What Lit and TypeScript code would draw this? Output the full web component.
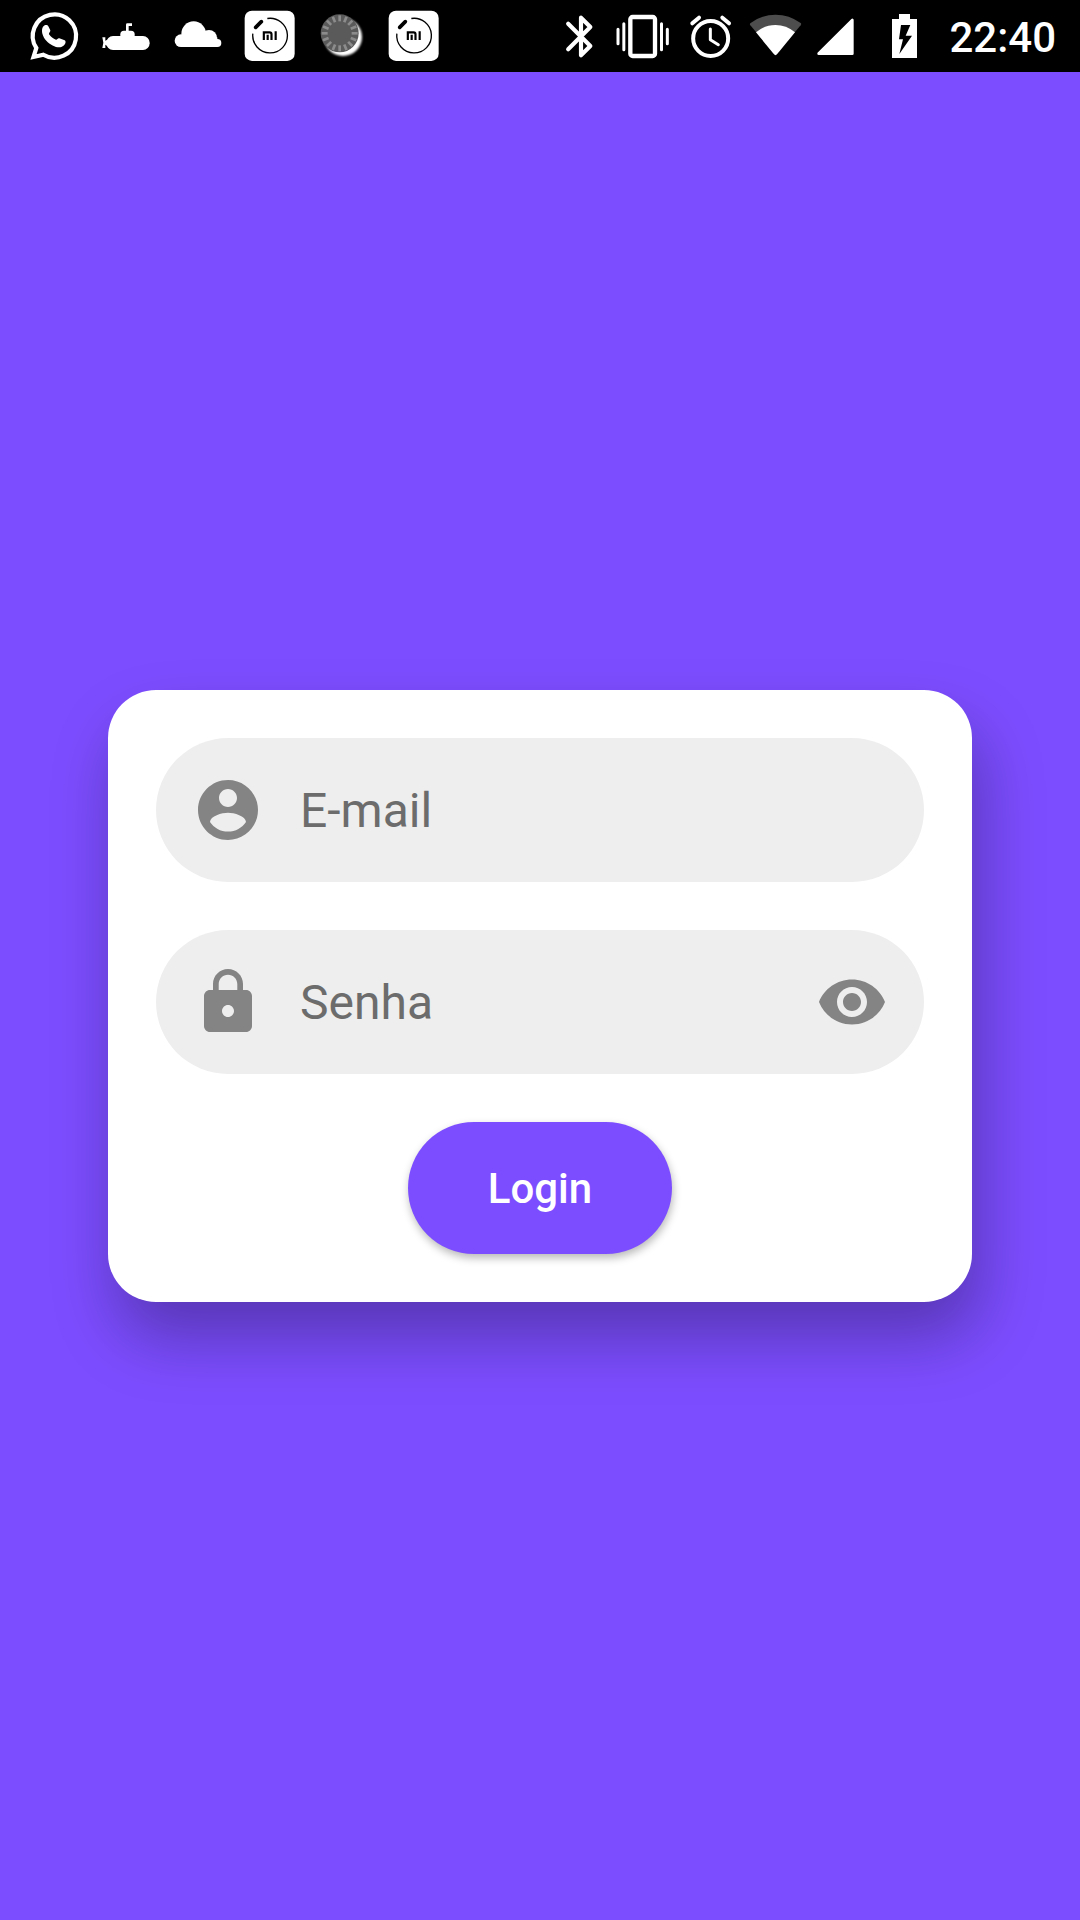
import { LitElement, html, svg, css } from "lit";
import { customElement, property } from "lit/decorators.js";

/* Status bar glyphs are drawn in thirds of a pixel inside 72px tall slots. */
const spokes = Array.from({ length: 16 }, (_, i) => i * 22.5);

const miBadge = svg`
  <rect x="44" y="32" width="150" height="151" rx="22" fill="#fff"/>
  <path d="M112 55.500A52 52 0 1 1 68.500 101" fill="none" stroke="#000" stroke-width="4"/>
  <path d="M77 82L94 65" stroke="#000" stroke-width="11" stroke-linecap="round"/>
  <path d="M101.500 120V97H119Q124.500 97 124.500 103V120M113 104V120M137 94V120" fill="none" stroke="#000" stroke-width="6.500"/>`;

const glyphs: Record<string, { x: number; w: number; art: unknown }> = {
  whatsapp: {
    x: 54, w: 216,
    art: svg`
      <path d="M109 144A65 65 0 1 1 130 164L100.500 171Z" fill="none" stroke="#fff" stroke-width="12.500" stroke-miterlimit="8"/>
      <path d="M134 76C139 74 143 75 145 79L151 91C152 95 146 99 147 103C152 110 160 116 168 119C171 120 174 113 178 115L194 121C200 125 196 137 184 141C172 145 152 136 139 122C128 110 122 92 129 80Z" fill="#fff"/>`,
  },
  submarine: {
    x: 270, w: 216,
    art: svg`
      <rect x="319" y="108" width="130" height="42" rx="20" fill="#fff"/>
      <path d="M361 112V103Q361 92 372 92H393Q404 92 404 103V112Z" fill="#fff"/>
      <path d="M382 95V74H396" fill="none" stroke="#fff" stroke-width="8" stroke-linejoin="round"/>
      <path d="M307 112H316V122L322 119V138L316 134V144H307L310 128Z" fill="#fff"/>`,
  },
  cloud: {
    x: 486, w: 216,
    art: svg`
      <g fill="#fff"><circle cx="543" cy="122" r="19"/><circle cx="581" cy="101" r="37"/>
      <circle cx="627" cy="114" r="24"/><circle cx="652" cy="129" r="12"/>
      <rect x="543" y="112" width="109" height="29"/></g>`,
  },
  mi: { x: 12, w: 216, art: miBadge },
  ball: {
    x: 228, w: 216,
    art: svg`
      <defs><filter id="soft" x="-20%" y="-20%" width="140%" height="140%"><feGaussianBlur stdDeviation="2.500"/></filter></defs>
      <circle cx="339" cy="111" r="57" fill="#fff" filter="url(#soft)"/>
      <circle cx="329" cy="100" r="57" fill="#5a5a5a"/>
      <g stroke="#8c8c8c" stroke-width="8">${spokes.map(
        (a) => svg`<path d="M329 64V46" transform="rotate(${a} 329 100)"/>`
      )}</g>`,
  },
  bluetooth: {
    x: 48, w: 150,
    art: svg`<path d="M84.500 71L151 138L123 166V53L151 81L84.500 148" fill="none" stroke="#fff" stroke-width="12.500" stroke-linecap="round" stroke-linejoin="round"/>`,
  },
  vibrate: {
    x: 198, w: 222,
    art: svg`
      <rect x="271" y="51" width="74" height="117" rx="7" fill="none" stroke="#fff" stroke-width="13"/>
      <path d="M251.500 71V149M364.500 71V149M234 88V131M382 88V131" stroke="#fff" stroke-width="9" stroke-linecap="round"/>`,
  },
  alarm: {
    x: 420, w: 186,
    art: svg`
      <circle cx="512" cy="115.500" r="52.500" fill="none" stroke="#fff" stroke-width="12"/>
      <path d="M511 87V119L535 134" fill="none" stroke="#fff" stroke-width="9" stroke-linecap="round" stroke-linejoin="round"/>
      <path d="M457 70L477 53M547 53L567 70" stroke="#fff" stroke-width="12" stroke-linecap="round"/>`,
  },
  wifi: {
    x: 606, w: 198,
    art: svg`
      <path d="M631 76Q628 72 632 69Q666 44 706.500 44Q748 44 782 69Q785 72 782 76L706.500 166Z" fill="#4d4d4d"/>
      <path d="M648 97Q674 75 706.500 75Q739 75 765 97L711 163Q706.500 168 702 163Z" fill="#fff"/>`,
  },
  signal: {
    x: 24, w: 186,
    art: svg`<path d="M56 160L157 60V161H56Z" fill="#fff" stroke="#fff" stroke-width="8" stroke-linejoin="round"/>`,
  },
  battery: {
    x: 210, w: 210,
    art: svg`
      <path d="M276 57H297V42H330V57H351V174H276Z" fill="#fff"/>
      <path d="M303 75H331L317 107H336L298 162L309 118H297Z" fill="#000"/>`,
  },
};

@customElement("status-glyph")
class StatusGlyph extends LitElement {
  @property() name = "";
  static styles = css`
    :host { display: block; flex: none; height: 72px; }
    .glyph { display: block; height: 72px; }
  `;
  render() {
    const g = glyphs[this.name];
    return html`<svg class="glyph" width=${g.w / 3} height="72" viewBox="${g.x} 0 ${g.w} 216" aria-hidden="true">${g.art}</svg>`;
  }
}

@customElement("status-bar")
class StatusBar extends LitElement {
  static styles = css`
    :host { display: flex; justify-content: space-between; box-sizing: border-box; height: 72px; padding: 0 24px 0 18px; background: #000; }
    .group { display: flex; }
    .time { width: 116px; color: #fff; font: 500 42px/76px Roboto, sans-serif; text-align: right; white-space: nowrap; }
  `;
  render() {
    const left = ["whatsapp", "submarine", "cloud", "mi", "ball", "mi"];
    const right = ["bluetooth", "vibrate", "alarm", "wifi", "signal", "battery"];
    return html`
      <div class="group">${left.map((n) => html`<status-glyph name=${n}></status-glyph>`)}</div>
      <div class="group">
        ${right.map((n) => html`<status-glyph name=${n}></status-glyph>`)}
        <div class="time">22:40</div>
      </div>`;
  }
}

const icons: Record<string, string> = {
  account:
    "M12 2C6.480 2 2 6.480 2 12s4.480 10 10 10 10-4.480 10-10S17.520 2 12 2zm0 3c1.660 0 3 1.340 3 3s-1.340 3-3 3-3-1.340-3-3 1.340-3 3-3zm0 14.200c-2.500 0-4.710-1.280-6-3.220.030-1.990 4-3.080 6-3.080 1.990 0 5.970 1.090 6 3.080-1.290 1.940-3.500 3.220-6 3.220z",
  lock: "M18 8h-1V6c0-2.760-2.240-5-5-5S7 3.240 7 6v2H6c-1.100 0-2 .900-2 2v10c0 1.100.900 2 2 2h12c1.100 0 2-.900 2-2V10c0-1.100-.900-2-2-2zm-6 9c-1.100 0-2-.900-2-2s.900-2 2-2 2 .900 2 2-.900 2-2 2zm3.100-9H8.900V6c0-1.710 1.390-3.100 3.100-3.100 1.710 0 3.100 1.390 3.100 3.100v2z",
  eye: "M12 4.500C7 4.500 2.730 7.610 1 12c1.730 4.390 6 7.500 11 7.500s9.270-3.110 11-7.500c-1.730-4.390-6-7.500-11-7.500zM12 17c-2.760 0-5-2.240-5-5s2.240-5 5-5 5 2.240 5 5-2.240 5-5 5zm0-8c-1.660 0-3 1.340-3 3s1.340 3 3 3 3-1.340 3-3-1.340-3-3-3z",
};

@customElement("login-field")
class LoginField extends LitElement {
  @property() label = "";
  @property() icon = "";
  @property() trailing = "";
  static styles = css`
    :host { display: flex; align-items: center; gap: 36px; box-sizing: border-box; height: 144px; padding: 0 36px; border-radius: 72px; background: #eee; }
    .icon { flex: none; width: 72px; height: 72px; fill: #848484; }
    .label { flex: 1; padding-top: 2px; color: #6c6c6c; font: 400 48px/56px Roboto, sans-serif; }
  `;
  private draw(name: string) {
    return html`<svg class="icon" viewBox="0 0 24 24" aria-hidden="true"><path d=${icons[name]}></path></svg>`;
  }
  render() {
    return html`${this.draw(this.icon)}<span class="label">${this.label}</span>${this.trailing ? this.draw(this.trailing) : ""}`;
  }
}

@customElement("app-root")
class AppRoot extends LitElement {
  static styles = css`
    :host { display: flex; flex-direction: column; height: 1920px; overflow: hidden; background: #7c4dff; }
    .main { flex: 1; display: flex; flex-direction: column; justify-content: center; padding: 0 108px; }
    .card { display: flex; flex-direction: column; gap: 48px; padding: 48px; border-radius: 48px; background: #fff; box-shadow: 8px 36px 64px rgba(0, 0, 0, 0.29); }
    .login { align-self: center; box-sizing: border-box; width: 264px; height: 132px; padding: 2px 0 0; border: 0; border-radius: 66px; background: #7c4dff; color: #fff; font: 500 42px/50px Roboto, sans-serif; box-shadow: 1px 4px 9px rgba(0, 0, 0, 0.28); }
  `;
  render() {
    return html`
      <status-bar></status-bar>
      <div class="main">
        <div class="card">
          <login-field label="E-mail" icon="account"></login-field>
          <login-field label="Senha" icon="lock" trailing="eye"></login-field>
          <button class="login">Login</button>
        </div>
      </div>`;
  }
}
